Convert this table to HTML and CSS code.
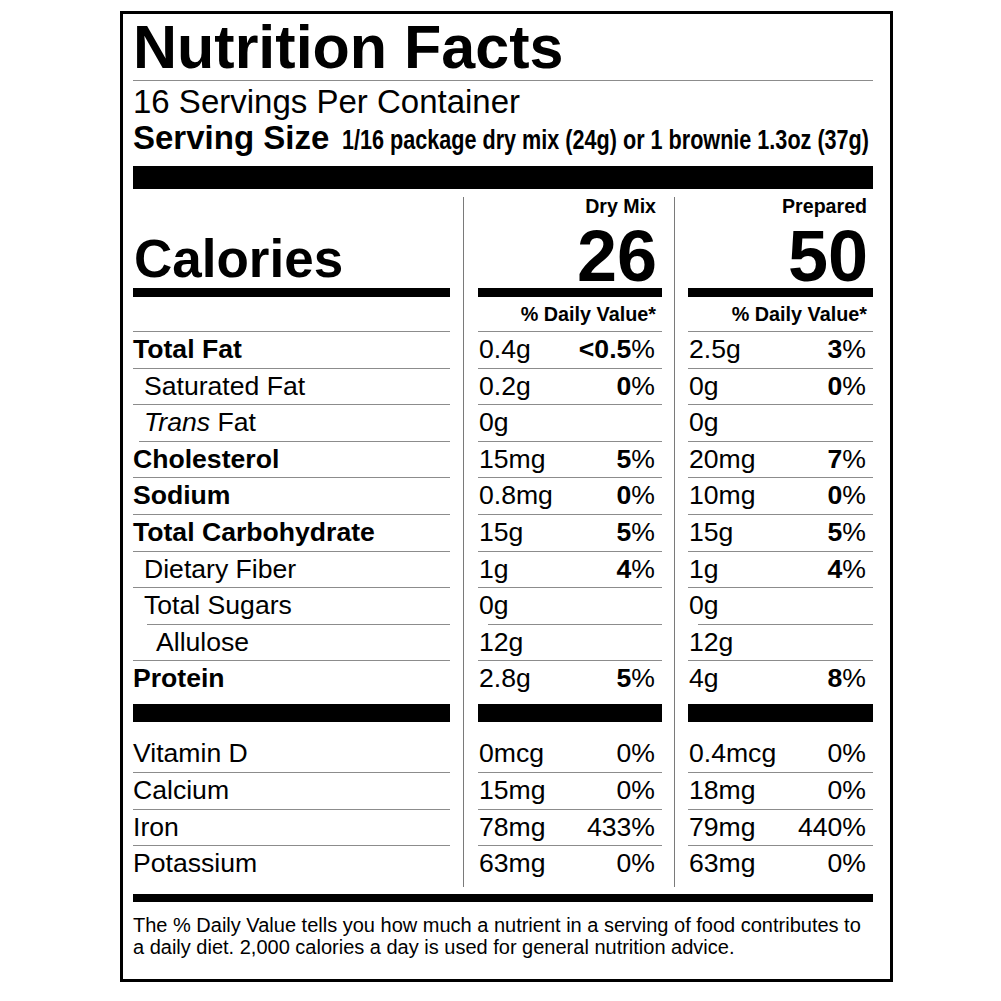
FILE: index.html
```html
<!DOCTYPE html>
<html lang="en">
<head>
<meta charset="utf-8">
<title>Nutrition Facts</title>
<link rel="stylesheet" href="styles.css">
</head>
<body>
<div class="label">
  <h1 class="title">Nutrition Facts</h1>
  <div class="rule-thin"></div>
  <div class="servings">16 Servings Per Container</div>
  <div class="size"><span class="size-k">Serving Size</span><span class="size-v">1/16 package dry mix (24g) or 1 brownie 1.3oz (37g)</span></div>
  <div class="bar-xl"></div>

  <div class="cols">
    <div class="col col-label">
      <div class="head head-label"><span class="cal">Calories</span></div>
      <div class="bar-m"></div>
      <div class="dv"></div>
      <div class="row"><b>Total Fat</b></div>
      <div class="row sub">Saturated Fat</div>
      <div class="row sub"><i>Trans</i>&nbsp;Fat</div>
      <div class="row ind-a"><b>Cholesterol</b></div>
      <div class="row"><b>Sodium</b></div>
      <div class="row"><b>Total Carbohydrate</b></div>
      <div class="row sub">Dietary Fiber</div>
      <div class="row sub">Total Sugars</div>
      <div class="row sub2 ind-b">Allulose</div>
      <div class="row"><b>Protein</b></div>
      <div class="bar-l"></div>
      <div class="row first">Vitamin D</div>
      <div class="row">Calcium</div>
      <div class="row">Iron</div>
      <div class="row">Potassium</div>
    </div>

    <div class="col col-val c2">
      <div class="head"><div class="ctitle">Dry Mix</div><div class="big">26</div></div>
      <div class="bar-m"></div>
      <div class="dv">% Daily Value*</div>
      <div class="row val"><span>0.4g</span><span><b>&lt;0.5</b>%</span></div>
      <div class="row val"><span>0.2g</span><span><b>0</b>%</span></div>
      <div class="row val"><span>0g</span><span></span></div>
      <div class="row val"><span>15mg</span><span><b>5</b>%</span></div>
      <div class="row val"><span>0.8mg</span><span><b>0</b>%</span></div>
      <div class="row val"><span>15g</span><span><b>5</b>%</span></div>
      <div class="row val"><span>1g</span><span><b>4</b>%</span></div>
      <div class="row val"><span>0g</span><span></span></div>
      <div class="row val ind-c"><span>12g</span><span></span></div>
      <div class="row val"><span>2.8g</span><span><b>5</b>%</span></div>
      <div class="bar-l"></div>
      <div class="row val first"><span>0mcg</span><span>0%</span></div>
      <div class="row val"><span>15mg</span><span>0%</span></div>
      <div class="row val"><span>78mg</span><span>433%</span></div>
      <div class="row val"><span>63mg</span><span>0%</span></div>
    </div>

    <div class="col col-val c3">
      <div class="head"><div class="ctitle">Prepared</div><div class="big">50</div></div>
      <div class="bar-m"></div>
      <div class="dv">% Daily Value*</div>
      <div class="row val"><span>2.5g</span><span><b>3</b>%</span></div>
      <div class="row val"><span>0g</span><span><b>0</b>%</span></div>
      <div class="row val"><span>0g</span><span></span></div>
      <div class="row val"><span>20mg</span><span><b>7</b>%</span></div>
      <div class="row val"><span>10mg</span><span><b>0</b>%</span></div>
      <div class="row val"><span>15g</span><span><b>5</b>%</span></div>
      <div class="row val"><span>1g</span><span><b>4</b>%</span></div>
      <div class="row val"><span>0g</span><span></span></div>
      <div class="row val ind-c"><span>12g</span><span></span></div>
      <div class="row val"><span>4g</span><span><b>8</b>%</span></div>
      <div class="bar-l"></div>
      <div class="row val first"><span>0.4mcg</span><span>0%</span></div>
      <div class="row val"><span>18mg</span><span>0%</span></div>
      <div class="row val"><span>79mg</span><span>440%</span></div>
      <div class="row val"><span>63mg</span><span>0%</span></div>
    </div>
  </div>

  <div class="bar-b"></div>
  <p class="foot">The % Daily Value tells you how much a nutrient in a serving of food contributes to a daily diet. 2,000 calories a day is used for general nutrition advice.</p>
</div>
</body>
</html>
```

FILE: styles.css
```css
html, body {
  margin: 0;
  background: #fff;
}

body {
  padding: 11px 0 0 120px;
  font-family: "Liberation Sans", Arial, Helvetica, sans-serif;
  color: #000;
}

.label {
  width: 740px;
  border: 3px solid #000;
  padding: 3px 17px 21px 10px;
}

.title {
  margin: 0;
  font-size: 61px;
  line-height: 60px;
  font-weight: bold;
}

.rule-thin {
  height: 1px;
  background: #8c8c8c;
  margin-top: 3px;
}

.servings {
  margin-top: 3px;
  font-size: 33px;
  line-height: 36px;
}

.size {
  height: 36px;
  font-size: 33px;
  line-height: 36px;
  white-space: nowrap;
}

.size-k {
  font-weight: bold;
}

.size-v {
  display: inline-block;
  margin-left: 13px;
  font-size: 27px;
  line-height: 30px;
  font-weight: bold;
  transform: scaleX(0.8);
  transform-origin: left center;
}

.bar-xl {
  height: 23px;
  background: #000;
  margin-top: 10px;
}

.cols {
  display: flex;
  margin-top: 8px;
}

.col-label {
  width: 317px;
}

.col-val {
  border-left: 1px solid #7a7a7a;
  padding-bottom: 5px;
}

.c2 {
  margin-left: 13px;
  padding-left: 14px;
  width: 184px;
}

.c3 {
  margin-left: 12px;
  padding-left: 13px;
  width: 185px;
}

.head {
  height: 91px;
  box-sizing: border-box;
}

.head-label {
  display: flex;
  align-items: flex-end;
  padding-bottom: 3px;
}

.cal {
  font-size: 53px;
  line-height: 52px;
  font-weight: bold;
  padding-left: 1px;
}

.ctitle {
  font-size: 19.6px;
  line-height: 19px;
  font-weight: bold;
  text-align: right;
  padding-right: 6px;
}

.big {
  margin-top: 10px;
  font-size: 72px;
  line-height: 60px;
  font-weight: bold;
  text-align: right;
  padding-right: 5px;
}

.bar-m {
  height: 9px;
  background: #000;
}

.dv {
  height: 34px;
  font-size: 19.8px;
  line-height: 34px;
  font-weight: bold;
  text-align: right;
  padding-right: 6px;
}

.row {
  height: 36.6px;
  box-sizing: border-box;
  padding-top: 1px;
  font-size: 26.6px;
  line-height: 35.6px;
  white-space: nowrap;
  background-image: linear-gradient(#8c8c8c, #8c8c8c);
  background-repeat: no-repeat;
  background-size: 100% 1px;
  background-position: 0 0;
}

.row.first {
  background-image: none;
  margin-top: 13.4px;
}

.sub {
  padding-left: 11px;
}

.sub2 {
  padding-left: 23px;
}

.ind-a {
  background-position: 6px 0;
}

.ind-b {
  background-position: 14px 0;
}

.ind-c {
  background-position: 10px 0;
}

.val {
  display: flex;
  justify-content: space-between;
  padding-left: 1px;
  padding-right: 7px;
}

.bar-l {
  height: 18px;
  background: #000;
  margin-top: 7px;
}

.bar-b {
  height: 8px;
  background: #000;
  margin-top: 7px;
}

.foot {
  margin: 12px 0 0;
  font-size: 20px;
  line-height: 22px;
}
```
